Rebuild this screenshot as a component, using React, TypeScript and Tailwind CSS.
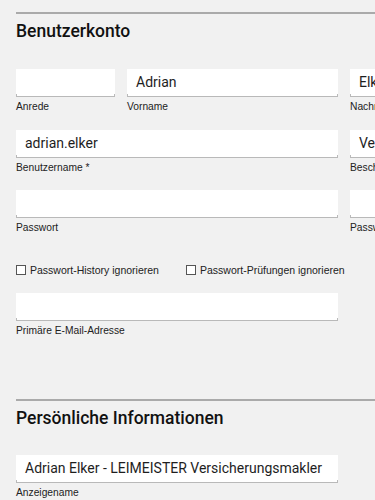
import React from "react";

function Field({
	label,
	value,
	width,
}: {
	label: string;
	value?: string;
	width: string;
}) {
	return (
		<div className={`flex flex-col shrink-0 ${width}`}>
			<div className="h-[27px] bg-white flex items-center pl-[9px] text-[14px] text-[#1e1e1e] font-['Roboto',sans-serif] whitespace-nowrap overflow-hidden">
				{value}
			</div>
			<div className="h-[3px] -mt-[2px] border-x border-b border-[#b9b9b9]" />
			<div className="mt-[3px] text-[10.25px] leading-[13px] text-[#222] font-['Liberation_Sans',Arial,sans-serif] whitespace-nowrap">
				{label}
			</div>
		</div>
	);
}

function Check({ label }: { label: string }) {
	return (
		<label className="flex items-center gap-[4px] text-[10.5px] leading-[14px] text-[#222] font-['Liberation_Sans',Arial,sans-serif] whitespace-nowrap">
			<span className="w-[10px] h-[10px] border border-[#555] bg-white shrink-0" />
			{label}
		</label>
	);
}

function Section({ title }: { title: string }) {
	return (
		<div className="border-t-2 border-[#aaaaaa] pt-[6px]">
			<h2 className="text-[17.5px] leading-[22px] font-medium text-[#111] font-['Roboto',sans-serif]">
				{title}
			</h2>
		</div>
	);
}

export default function App() {
	return (
		<div className="w-[375px] h-[500px] overflow-hidden bg-[#f1f1f1] pl-4 pt-3">
			<div className="w-[600px]">
				<Section title="Benutzerkonto" />

				<div className="mt-[27px] flex gap-3">
					<Field label="Anrede" width="w-[99px]" />
					<Field label="Vorname" value="Adrian" width="w-[211px]" />
					<Field label="Nachname" value="Elker" width="w-[211px]" />
				</div>

				<div className="mt-[17px] flex gap-3">
					<Field label="Benutzername *" value="adrian.elker" width="w-[322px]" />
					<Field label="Beschreibung" value="Versicherungsmakler" width="w-[211px]" />
				</div>

				<div className="mt-[16px] flex gap-3">
					<Field label="Passwort" width="w-[322px]" />
					<Field label="Passwort wiederholen" width="w-[211px]" />
				</div>

				<div className="mt-[29px] flex gap-[27px]">
					<Check label="Passwort-History ignorieren" />
					<Check label="Passwort-Prüfungen ignorieren" />
				</div>

				<div className="mt-[16px] flex">
					<Field label="Primäre E-Mail-Adresse" width="w-[322px]" />
				</div>

				<div className="mt-[62px]">
					<Section title="Persönliche Informationen" />
				</div>

				<div className="mt-[26px] flex">
					<Field
						label="Anzeigename"
						value="Adrian Elker - LEIMEISTER Versicherungsmakler"
						width="w-[322px]"
					/>
				</div>
			</div>
		</div>
	);
}
